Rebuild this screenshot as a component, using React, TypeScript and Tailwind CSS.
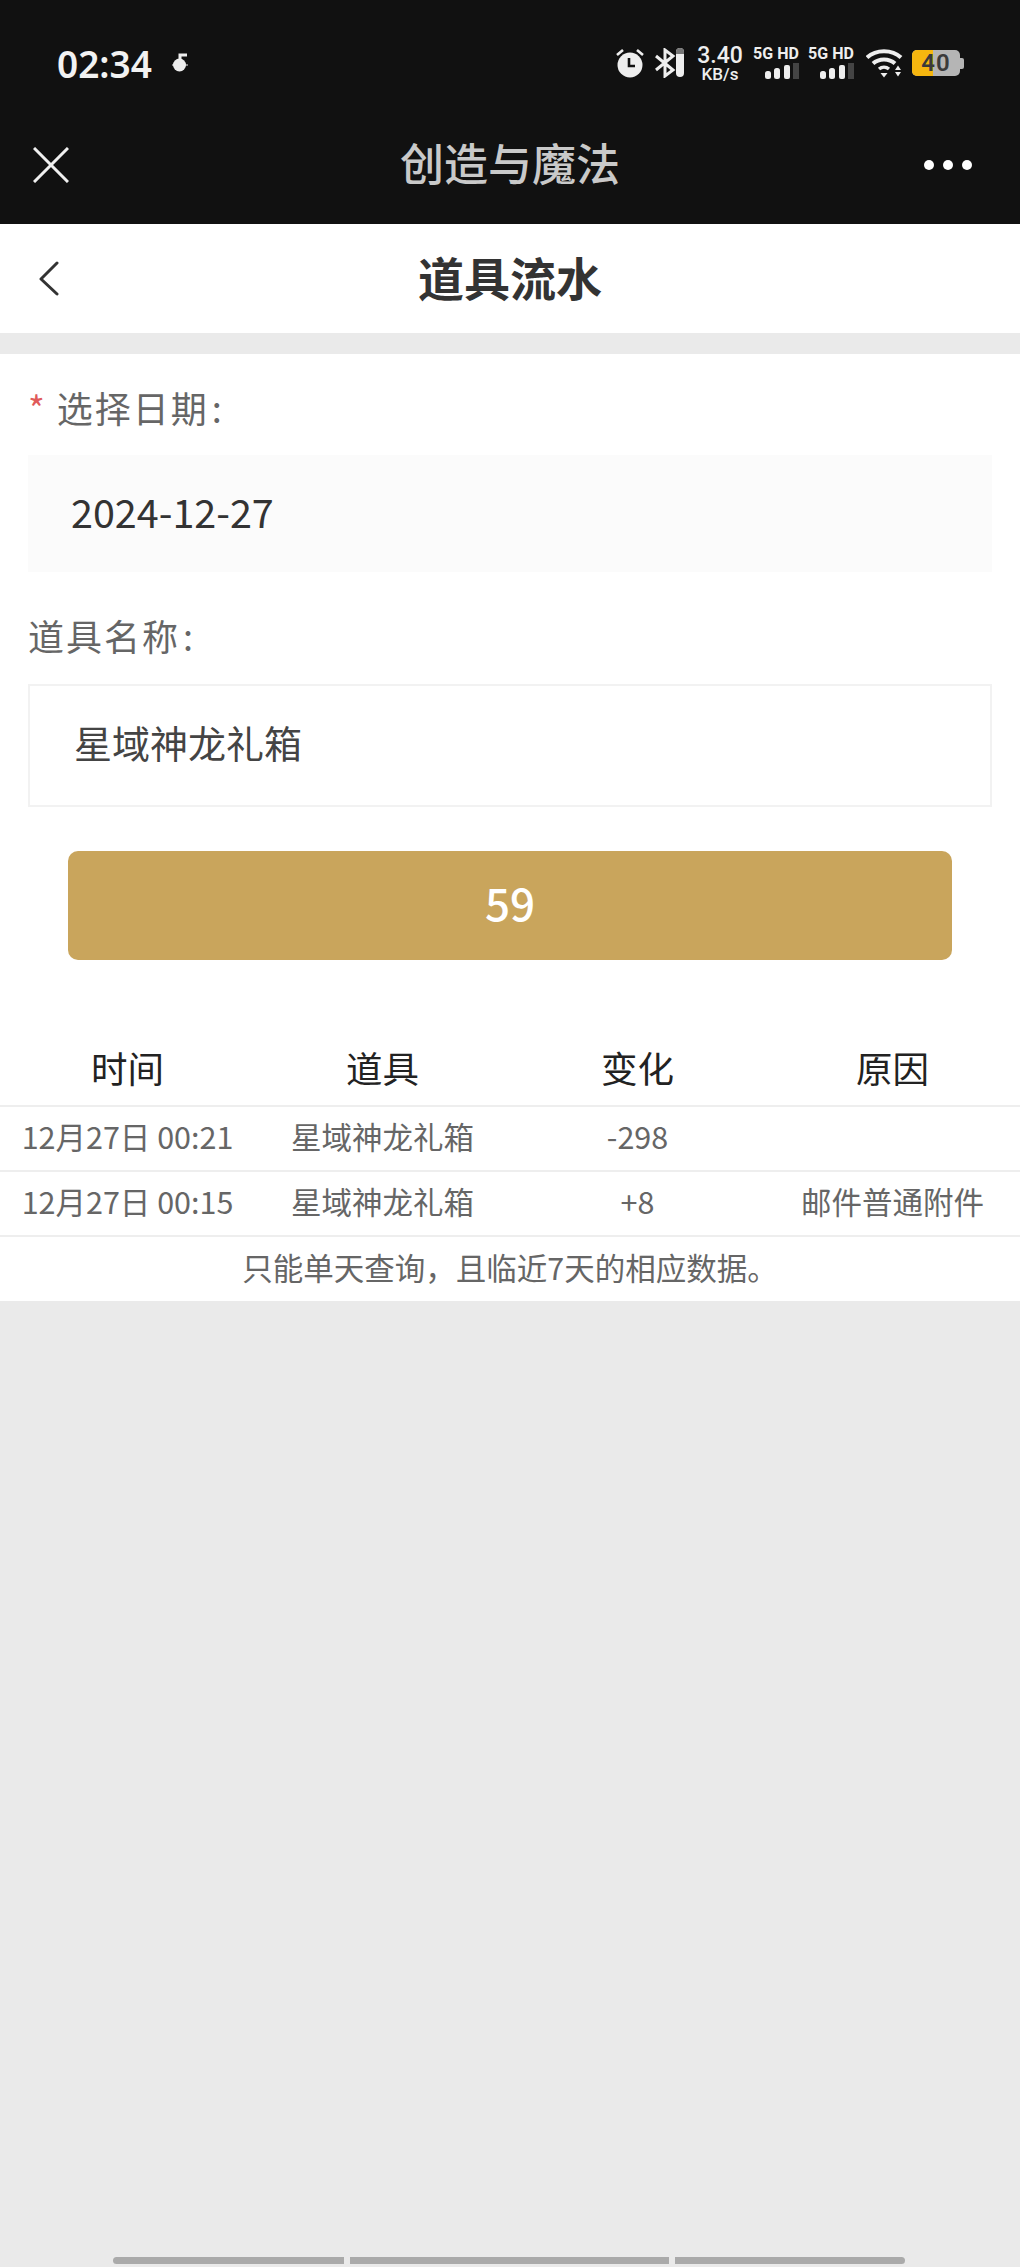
import React from "react";

const cjk = "font-['Noto_Sans_CJK_SC','Noto_Sans',sans-serif]";

function Signal() {
  return (
    <div className="flex flex-col items-center w-[46px]">
      <div className="text-[16px] leading-[15px] font-bold text-[#eee] whitespace-nowrap font-['Roboto',sans-serif]">5G HD</div>
      <svg width="46" height="18" viewBox="0 0 46 18" className="mt-[2px]">
        <rect x="12" y="8" width="6" height="8" rx="2.5" fill="#eee" />
        <rect x="21" y="5" width="6" height="11" rx="2.5" fill="#eee" />
        <rect x="31" y="2" width="6" height="14" rx="2" fill="#eee" />
        <rect x="40" y="0" width="6" height="16" fill="#444" />
      </svg>
    </div>
  );
}

function StatusIcons() {
  return (
    <div className="flex items-center">
      <svg width="30" height="30" viewBox="0 0 30 30" className="mr-[9px]">
        <circle cx="15" cy="17" r="12.5" fill="#eee" />
        <path d="M14 10v8h6" fill="none" stroke="#111" strokeWidth="2.6" />
        <path d="M2 7l6-5M28 7l-6-5" stroke="#eee" strokeWidth="2.6" />
      </svg>
      <svg width="31" height="30" viewBox="0 0 31 30" className="mr-[12px]">
        <path d="M2 8l17 14-8 6V2l8 6L2 22" fill="none" stroke="#eee" strokeWidth="3" />
        <rect x="22" y="0" width="8" height="29" rx="4" fill="#eee" />
        <path d="M22 4a4 4 0 0 1 8 0v2h-8z" fill="#777" />
      </svg>
      <div className="flex flex-col items-center w-[46px] mr-[10px] font-['Roboto',sans-serif] text-[#eee] font-medium">
        <div className="text-[23px] leading-[22px]">3.40</div>
        <div className="text-[17px] leading-[14px]">KB/s</div>
      </div>
      <div className="mr-[9px]"><Signal /></div>
      <div className="mr-[12px]"><Signal /></div>
      <svg width="37" height="30" viewBox="0 0 37 30" className="mr-[9px]">
        <path d="M1 9.5C10 1 26 1 35 9.5" fill="none" stroke="#eee" strokeWidth="4" />
        <path d="M7 15.5C13 10 23 10 29 15.5" fill="none" stroke="#eee" strokeWidth="4" />
        <path d="M13 21c3-2.4 7-2.4 10 0" fill="none" stroke="#eee" strokeWidth="3.5" />
        <path d="M14.5 25h7L18 29.5z" fill="#eee" />
        <path d="M29 22h6l-3-4.5zM29 24h6l-3 4.5z" fill="#eee" />
      </svg>
      <div className="relative w-[48px] h-[26px] rounded-[5px] overflow-hidden bg-[#b5b5b5] flex items-center justify-center">
        <div className="absolute left-0 top-0 bottom-0 w-[21px] bg-[#f6b60f]" />
        <span className="relative text-[24px] leading-none font-semibold text-[#3a3a3a] font-['Roboto',sans-serif] tracking-[1px]">40</span>
      </div>
      <div className="w-[4px] h-[11px] bg-[#b5b5b5] rounded-r-[2px]" />
    </div>
  );
}

function Row({ a, b, c, d }: { a: string; b: string; c: string; d: string }) {
  return (
    <div className="grid grid-cols-4 h-[65px] pb-[3px] items-center text-center text-[30.5px] text-[#666] border-b-2 border-[#eeeeee] box-border whitespace-nowrap">
      <div>{a}</div>
      <div>{b}</div>
      <div>{c}</div>
      <div>{d}</div>
    </div>
  );
}

export default function App() {
  return (
    <div className={`w-[1020px] h-[2267px] flex flex-col bg-[#eaeaea] overflow-hidden ${cjk}`}>
      <header className="bg-[#111111] h-[224px] shrink-0">
        <div className="h-[124px] pl-[57px] pr-[56px] pt-[2px] flex items-center justify-between">
          <div className="flex items-center">
            <span className="text-[37px] leading-none font-semibold text-[#f2f2f2] font-['Noto_Sans',sans-serif]">02:34</span>
            <svg width="18" height="20" viewBox="0 0 18 20" className="ml-[19px]">
              <circle cx="8.5" cy="12" r="6.5" fill="#eee" />
              <path d="M9 12V2h7" fill="none" stroke="#eee" strokeWidth="3" />
              <path d="M1 12h16" stroke="#eee" strokeWidth="1" />
            </svg>
          </div>
          <StatusIcons />
        </div>
        <div className="h-[100px] px-[33px] flex items-center pb-[20px]">
          <div className="flex-1">
            <svg width="36" height="36" viewBox="0 0 36 36" fill="none" stroke="#f0f0f0" strokeWidth="3" className="mt-[2px]">
              <path d="M1 1l34 34M35 1L1 35" />
            </svg>
          </div>
          <span className="text-[44px] leading-none text-[#c9c9c9] font-medium pb-[5px]">创造与魔法</span>
          <div className="flex-1 flex justify-end gap-[9px] pt-[2px]">
            <span className="w-[10px] h-[10px] rounded-full bg-white" />
            <span className="w-[10px] h-[10px] rounded-full bg-white" />
            <span className="w-[10px] h-[10px] rounded-full bg-white mr-[15px]" />
          </div>
        </div>
      </header>

      <nav className="bg-white h-[109px] shrink-0 flex items-center pl-[38px] pr-[38px]">
        <div className="flex-1">
          <svg width="22" height="36" viewBox="0 0 22 36" fill="none" stroke="#333" strokeWidth="3" strokeLinecap="round" strokeLinejoin="round">
            <path d="M19 2L3 18l16 15" />
          </svg>
        </div>
        <span className="text-[46px] leading-none font-bold text-[#333333] pb-[6px]">道具流水</span>
        <div className="flex-1" />
      </nav>

      <main className="mt-[21px] bg-white shrink-0">
        <div className="px-[28px] pt-[32px]">
          <div className="h-[48px] pb-[6px] flex items-center text-[36px] leading-none text-[#666666] tracking-[2px]">
            <span className="text-[#e05a5a] mr-[10px] text-[36px]">*</span>
            <span>选择日期<span className="ml-[3px]">:</span></span>
          </div>
          <div className="mt-[21px] h-[117px] pb-[6px] bg-[#fbfbfb] flex items-center pl-[43px] text-[39.5px] leading-none text-[#333333]">2024-12-27</div>
          <div className="mt-[42px] h-[48px] pb-[6px] flex items-center text-[36px] leading-none text-[#666666] tracking-[2px]">
            <span>道具名称<span className="ml-[3px]">:</span></span>
          </div>
          <div className="mt-[22px] h-[123px] pb-[7px] border-2 border-[#f2f2f2] flex items-center pl-[44px] text-[38px] leading-none text-[#444444]">星域神龙礼箱</div>
        </div>
        <div className="mt-[44px] mx-[68px] h-[109px] pb-[7px] rounded-[10px] bg-[#c9a55c] flex items-center justify-center text-[44px] font-medium text-white">59</div>

        <div className="mt-[81px]">
          <div className="grid grid-cols-4 h-[66px] pb-[16px] items-center text-center text-[36.5px] text-[#222222] border-b-2 border-[#eeeeee] box-border">
            <div>时间</div>
            <div>道具</div>
            <div>变化</div>
            <div>原因</div>
          </div>
          <Row a="12月27日 00:21" b="星域神龙礼箱" c="-298" d="" />
          <Row a="12月27日 00:15" b="星域神龙礼箱" c="+8" d="邮件普通附件" />
          <div className="h-[64px] pb-[3px] flex items-center justify-center text-[30.5px] text-[#666666]">只能单天查询，且临近7天的相应数据。</div>
        </div>
      </main>

      <div className="flex-1 flex items-end pb-[3px] pl-[113px] gap-[6px]">
        <div className="w-[231px] h-[7px] bg-[#aaaaaa] rounded-l-full" />
        <div className="w-[319px] h-[7px] bg-[#aaaaaa]" />
        <div className="w-[230px] h-[7px] bg-[#aaaaaa] rounded-r-full" />
      </div>
    </div>
  );
}
